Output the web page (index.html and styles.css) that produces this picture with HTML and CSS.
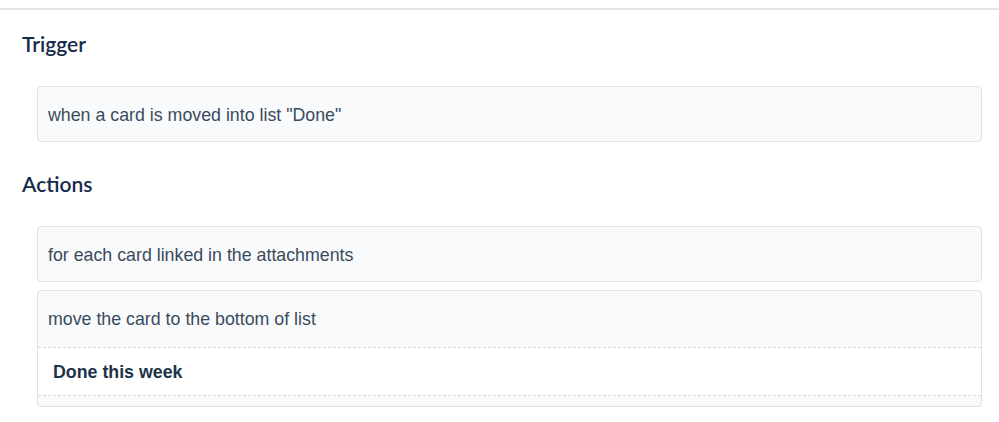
FILE: index.html
```html
<!DOCTYPE html>
<html>
<head>
<meta charset="utf-8">
<link rel="stylesheet" href="styles.css">
</head>
<body>
<div class="page">
  <section class="section">
    <h2 class="heading">Trigger</h2>
    <div class="card">
      <div class="card-text">when a card is moved into list "Done"</div>
    </div>
  </section>
  <section class="section">
    <h2 class="heading">Actions</h2>
    <div class="card">
      <div class="card-text">for each card linked in the attachments</div>
    </div>
    <div class="card">
      <div class="card-text card-text-top">move the card to the bottom of list</div>
      <div class="card-param">Done this week</div>
    </div>
  </section>
</div>
</body>
</html>
```

FILE: styles.css
```css
html, body {
  margin: 0;
  padding: 0;
  background: #ffffff;
}

.page {
  margin-top: 8px;
  border-top: 2px solid #e4e4e4;
  padding: 22px 17px 0 22px;
}

.section {
  display: flex;
  flex-direction: column;
  gap: 8px;
  margin-bottom: 30px;
}

.heading {
  margin: 0 0 22px 0;
  font-family: Lato, "Noto Sans", sans-serif;
  font-size: 21px;
  font-weight: 600;
  line-height: 24px;
  color: #172b4d;
}

.card {
  margin-left: 15px;
  border: 1px solid #dfe1e6;
  border-radius: 4px;
  background: #f9fafc;
  font-family: "Liberation Sans", Arial, sans-serif;
  font-size: 17.8px;
  line-height: 22px;
  color: #3a4b5c;
}

.card-text {
  padding: 17px 10px 15px;
}

.card-text-top {
  padding-bottom: 17px;
}

.card-param {
  margin-bottom: 10px;
  padding: 13px 15px 12px;
  background: #ffffff;
  border-top: 1px dashed #d6d9de;
  border-bottom: 1px dashed #d6d9de;
  font-weight: bold;
  color: #1c3348;
}
```
